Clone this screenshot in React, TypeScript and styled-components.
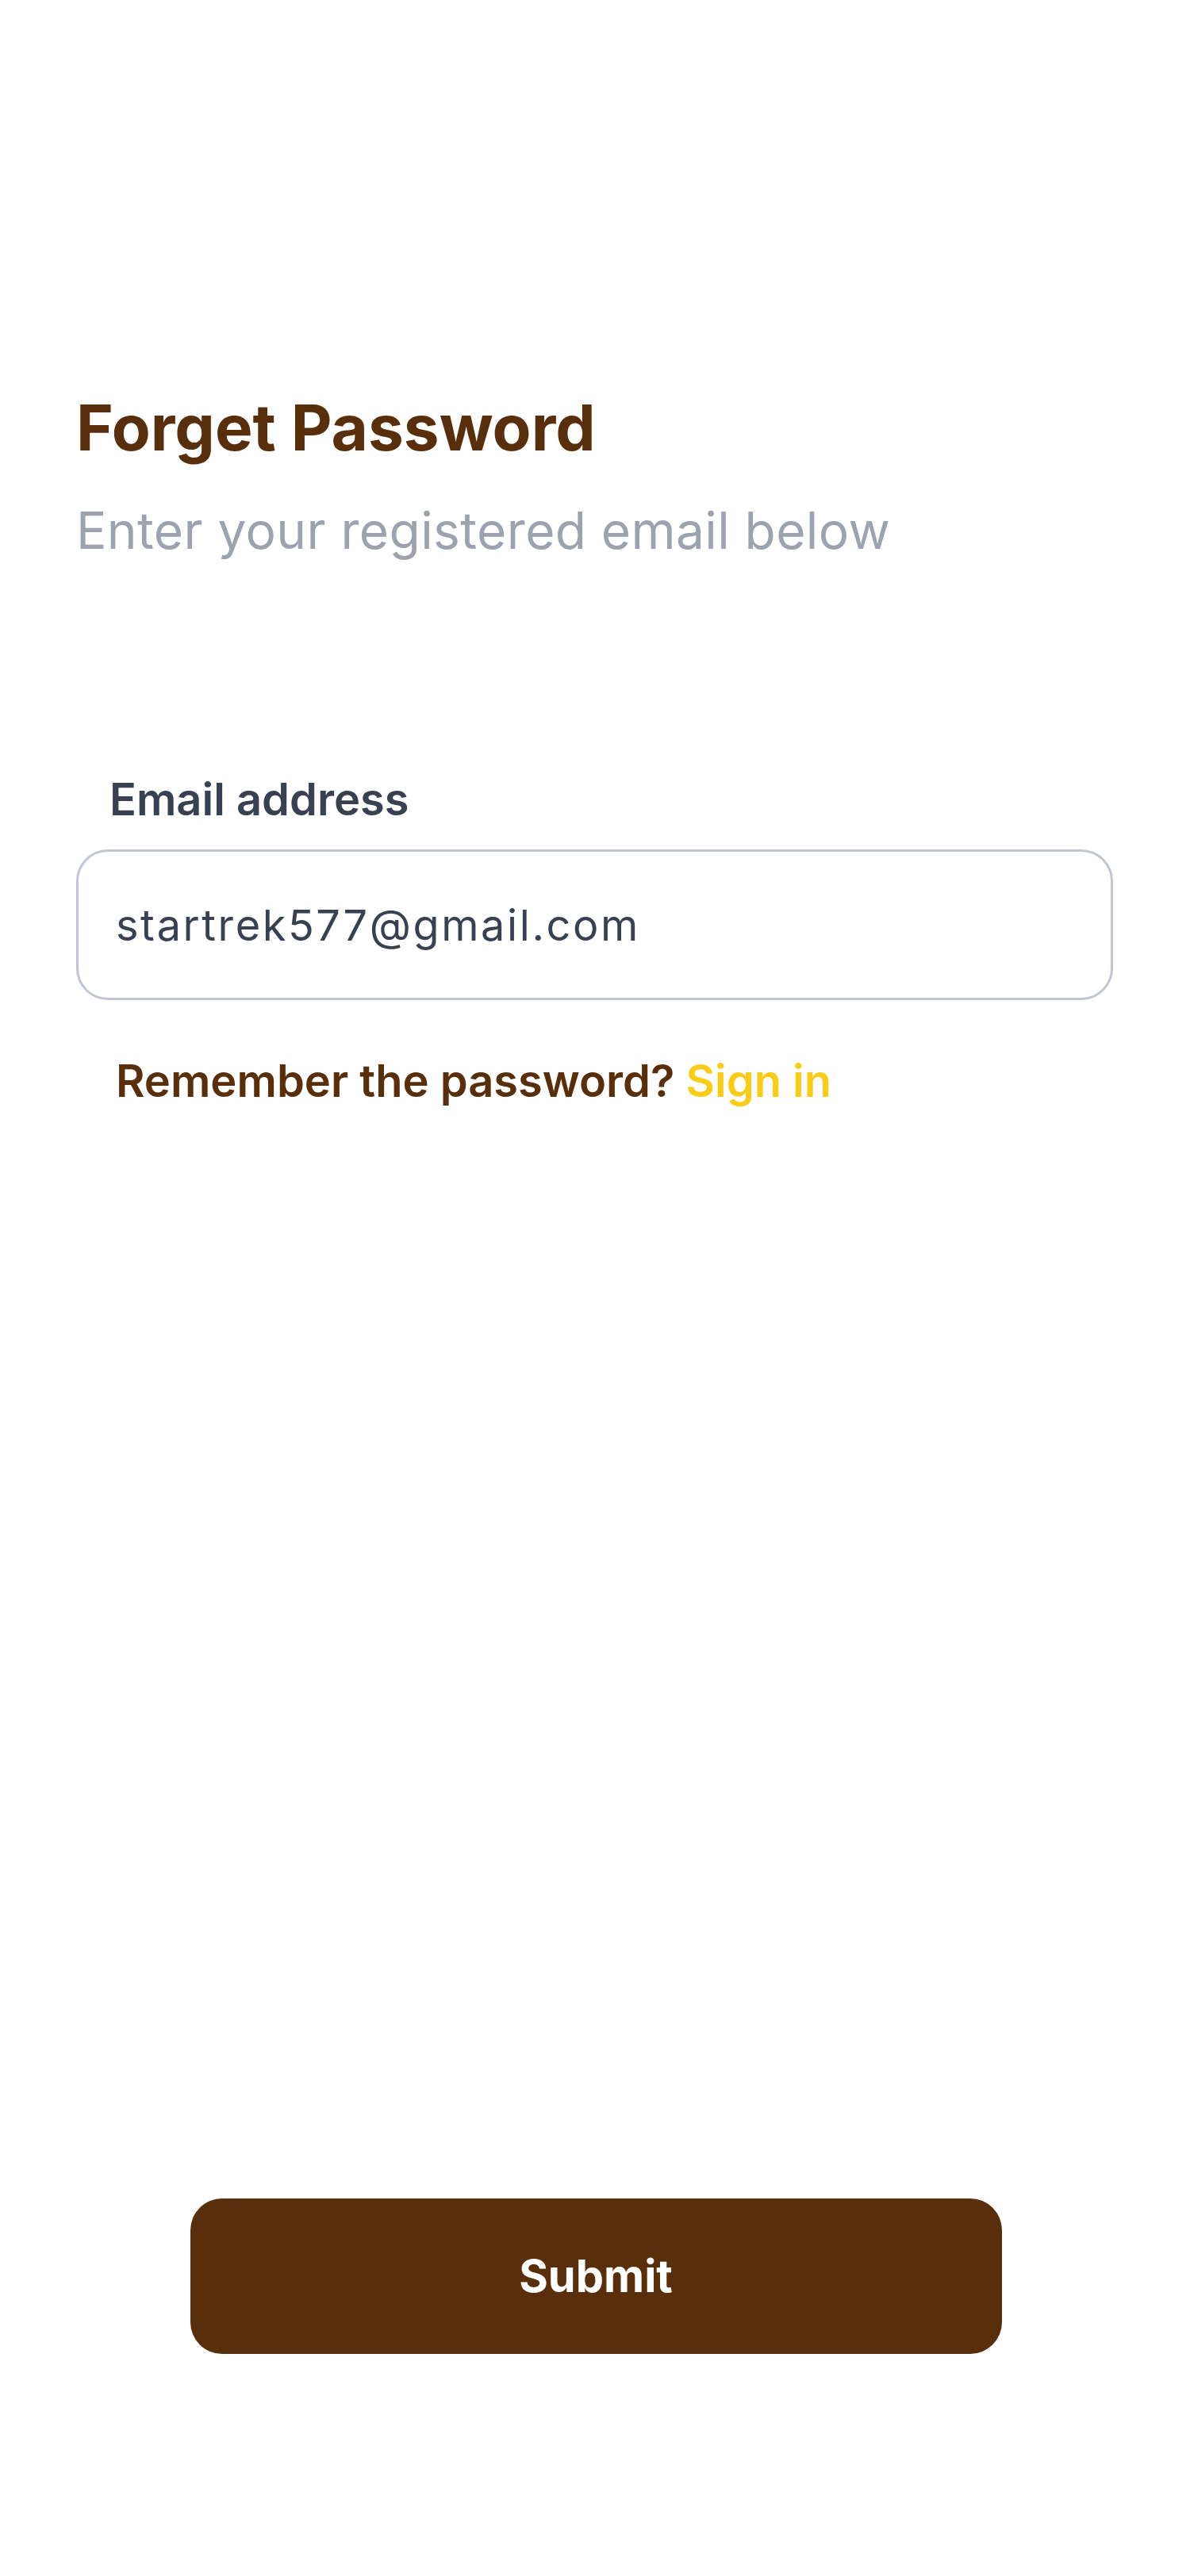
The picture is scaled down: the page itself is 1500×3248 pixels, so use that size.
import { createGlobalStyle, styled } from 'styled-components';

const GlobalStyle = createGlobalStyle`
  html, body {
    margin: 0;
    padding: 0;
    background: #ffffff;
    font-family: Inter, "Noto Sans", "Liberation Sans", sans-serif;
  }
`;

export default function App() {
  return (
    <>
      <GlobalStyle />
      <StyledPage>
        <StyledHeader>
          <StyledTitle>Forget Password</StyledTitle>
          <StyledSubtitle>Enter your registered email below</StyledSubtitle>
        </StyledHeader>

        <StyledField>
          <StyledLabel htmlFor="email">Email address</StyledLabel>
          <StyledInput
            id="email"
            type="email"
            defaultValue="startrek577@gmail.com"
          />
        </StyledField>

        <StyledRemember>
          Remember the password? <StyledLink href="#">Sign in</StyledLink>
        </StyledRemember>

        <StyledSpacer />

        <StyledButton type="button">Submit</StyledButton>
      </StyledPage>
    </>
  );
}

const StyledPage = styled.div`
  display: flex;
  flex-direction: column;
  min-height: 3248px;
  box-sizing: border-box;
  padding: 491px 97px 280px 96px;
`;

const StyledHeader = styled.div`
  display: flex;
  flex-direction: column;
  gap: 44px;
`;

const StyledTitle = styled.h1`
  margin: 0;
  font-size: 80px;
  line-height: 96px;
  font-weight: 700;
  color: #582e0b;
`;

const StyledSubtitle = styled.p`
  margin: 0;
  font-size: 64px;
  line-height: 76px;
  font-weight: 400;
  letter-spacing: 0.4px;
  color: #9ca3af;
`;

const StyledField = styled.div`
  display: flex;
  flex-direction: column;
  gap: 30px;
  margin-top: 268px;
`;

const StyledLabel = styled.label`
  padding-left: 42px;
  font-size: 56px;
  line-height: 66px;
  font-weight: 600;
  color: #374151;
`;

const StyledInput = styled.input`
  box-sizing: border-box;
  width: 100%;
  height: 190px;
  padding: 0 47px;
  border: 3px solid #c1c6d3;
  border-radius: 40px;
  outline: none;
  background: #ffffff;
  font-family: inherit;
  font-size: 54px;
  font-weight: 400;
  letter-spacing: 2.6px;
  color: #374151;
`;

const StyledRemember = styled.p`
  margin: 69px 0 0;
  padding-left: 50px;
  font-size: 56px;
  line-height: 66px;
  font-weight: 600;
  color: #582e0b;
`;

const StyledLink = styled.a`
  color: #facc15;
  text-decoration: none;
`;

const StyledSpacer = styled.div`
  flex: 1;
`;

const StyledButton = styled.button`
  align-self: center;
  width: 1023px;
  height: 196px;
  margin-left: 3px;
  border: none;
  border-radius: 40px;
  background: #582e0b;
  font-family: inherit;
  font-size: 56px;
  font-weight: 700;
  color: #ffffff;
  cursor: pointer;
`;
